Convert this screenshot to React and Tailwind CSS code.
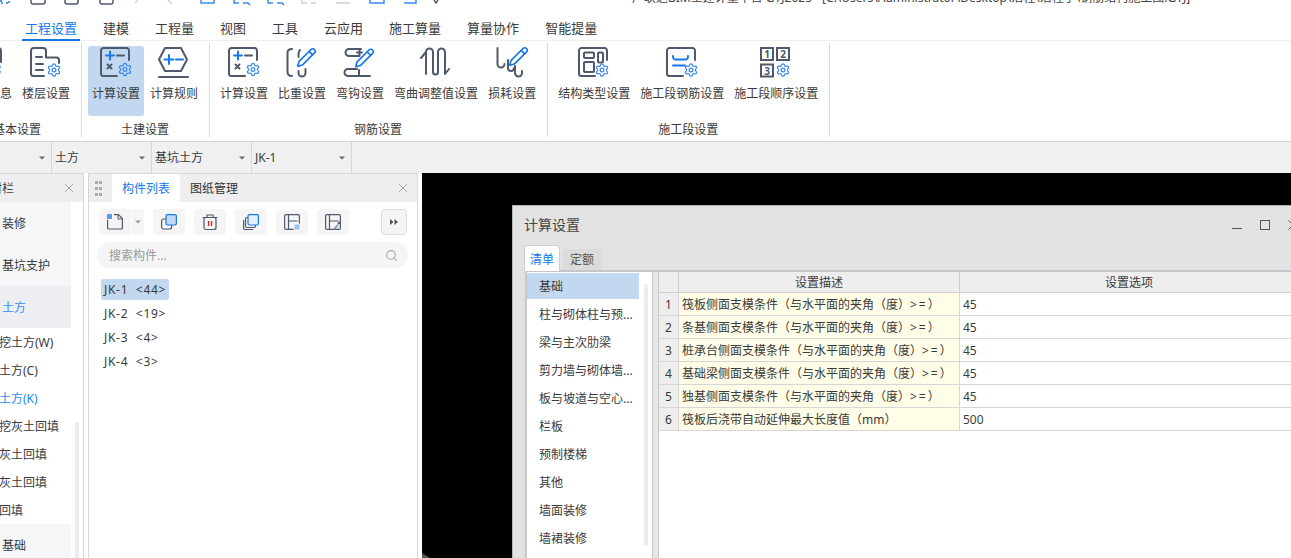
import { Settings, Pencil, X, Search } from 'lucide-react';

const INK = '#50586b';
const BLUE = '#1677e8';
const GEAR = '#3d8bef';

const Gear = ({ x = 17.5, y = 15 }) => <Settings x={x} y={y} size={15} color={GEAR} strokeWidth={2} />;
const Pen = ({ x = 10, y = 0 }) => <Pencil x={x} y={y} size={21} color={BLUE} strokeWidth={1.9} />;

const Ico = ({ children }) => (
  <svg width="30" height="30" viewBox="0 0 30 30" fill="none" stroke={INK} strokeWidth="2" strokeLinecap="round" strokeLinejoin="round" className="overflow-visible mr-[2px] shrink-0">
    {children}
  </svg>
);

const Frame = () => <path d="M17 29H3.5A2.5 2.5 0 0 1 1 26.500V3.500A2.500 2.500 0 0 1 3.500 1h23A2.500 2.500 0 0 1 29 3.500V13" />;

const CalcIcon = () => (
  <Ico>
    <Frame />
    <path d="M6 8.500h8M10 4.500v8" stroke={BLUE} />
    <path d="M17 8.500h7" />
    <path d="M7.500 17.500l4 4M11.500 17.500l-4 4" />
    <Gear />
  </Ico>
);

const icons = {
  info: () => (
    <Ico>
      <path d="M22 1h4a3 3 0 0 1 3 3v11" />
      <Gear x={15} y={15} />
    </Ico>
  ),
  floor: () => (
    <Ico>
      <path d="M14 29H3.500A2.500 2.500 0 0 1 1 26.500V3.500A2.500 2.500 0 0 1 3.500 1H13a3 3 0 0 1 3 3v6.500h10.500a2.500 2.500 0 0 1 2.500 2.500v3" />
      <path d="M6 10h6M6 17h7M6 23h7" />
      <Gear x={16.500} y={15.500} />
    </Ico>
  ),
  calc: CalcIcon,
  rule: () => (
    <Ico>
      <path d="M7 1h16l6 11.500-6 11.500H7L1 12.500z" />
      <path d="M6.500 12.500h9M11 8v9M18 12.500h7" stroke={BLUE} />
      <path d="M1 30h29" />
    </Ico>
  ),
  weight: () => (
    <Ico>
      <path d="M6 2C3 2 1.500 3.500 1.500 6v19c0 2.500 1.500 4 4.500 4" />
      <path d="M14 3c-1 1-1.500 2-1.500 4v3" />
      <path d="M12.500 24v2a3.500 3.500 0 0 0 7 0v-4" />
      <Pen />
    </Ico>
  ),
  hook: () => (
    <Ico>
      <path d="M17 2H5a3.500 3.500 0 0 0 0 7h10" />
      <path d="M13 5.500h5M15.500 2v7" />
      <path d="M13 22H4a3.500 3.500 0 0 0 0 7h22M15 23v6" />
      <Pen x={10} y={0.500} />
    </Ico>
  ),
  bend: () => (
    <Ico>
      <path d="M1 11l5-6v22M6 5a3.500 3.500 0 0 1 7 0v20a2.500 2.500 0 0 0 5 0V5a3.500 3.500 0 0 1 7 0v22l4-5" />
    </Ico>
  ),
  loss: () => (
    <Ico>
      <path d="M1.500 1v16a3.500 3.500 0 0 0 7 0" />
      <path d="M12 13v8a3 3 0 0 0 6 0" />
      <path d="M19 19v7a3 3 0 0 0 7 0v-2" />
      <Pen x={12} y={-1} />
    </Ico>
  ),
  struct: () => (
    <Ico>
      <Frame />
      <rect x="6" y="5.500" width="10" height="5.500" rx="1" />
      <rect x="20" y="5.500" width="5" height="10" rx="1" />
      <rect x="6" y="15" width="10" height="10" rx="1" />
      <Gear x={16.500} y={15.500} />
    </Ico>
  ),
  rebar: () => (
    <Ico>
      <Frame />
      <path d="M7 9c0 3 1 3.500 3 3.500h9c2 0 3-.5 3-3.500M7 18.500h12" stroke={BLUE} />
      <Gear x={17.500} y={15.500} />
    </Ico>
  ),
  order: () => (
    <Ico>
      <rect x="1" y="1" width="12" height="12" strokeLinejoin="miter" />
      <rect x="17" y="1" width="12" height="12" strokeLinejoin="miter" />
      <rect x="1" y="17.500" width="12" height="12" strokeLinejoin="miter" />
      <text x="7" y="11" textAnchor="middle" fontSize="10" fontWeight="700" fill={INK} stroke="none">1</text>
      <text x="23" y="11" textAnchor="middle" fontSize="10" fontWeight="700" fill={INK} stroke="none">2</text>
      <text x="7" y="27.500" textAnchor="middle" fontSize="10" fontWeight="700" fill={INK} stroke="none">3</text>
      <Gear x={15.500} y={15.500} />
    </Ico>
  ),
};

const groups = [
  { label: '基本设置', items: [['基本信息', 'info'], ['楼层设置', 'floor']] },
  { label: '土建设置', items: [['计算设置', 'calc', true], ['计算规则', 'rule']] },
  { label: '钢筋设置', items: [['计算设置', 'calc'], ['比重设置', 'weight'], ['弯钩设置', 'hook'], ['弯曲调整值设置', 'bend'], ['损耗设置', 'loss']] },
  { label: '施工段设置', items: [['结构类型设置', 'struct'], ['施工段钢筋设置', 'rebar'], ['施工段顺序设置', 'order']] },
];

const tabs = ['工程设置', '建模', '工程量', '视图', '工具', '云应用', '施工算量', '算量协作', '智能提量'];

const Caret = ({ color = '#666' }) => (
  <svg width="6" height="4" viewBox="0 0 6 4"><path d="M0 .5h6L3 3.500z" fill={color} /></svg>
);

const ToolSvg = ({ children }) => (
  <svg width="16" height="16" viewBox="0 0 16 16" fill="none" stroke={INK} strokeWidth="1.200" strokeLinejoin="round" className="overflow-visible">
    {children}
  </svg>
);

const tools = [
  <ToolSvg>
    <path d="M7 .6h4.500L15.400 4.500v9.500a1 1 0 0 1-1 1H1.600a1 1 0 0 1-1-1V6" />
    <path d="M11 .6v4.400h4.400" strokeWidth="1" />
    <rect x="0" y="0" width="5" height="5" fill="#5b9bef" stroke="none" />
  </ToolSvg>,
  <ToolSvg>
    <rect x=".6" y="5" width="10" height="10" rx="2" />
    <rect x="5" y=".6" width="10.400" height="10.400" rx="1.500" fill="#c1d8f0" stroke={BLUE} />
  </ToolSvg>,
  <ToolSvg>
    <path d="M.6 3.500h14.800M5 3.500V1h6v2.500" />
    <rect x="2" y="3.500" width="12" height="12" rx="2" />
    <path d="M6.500 7v5M9.500 7v5" stroke="#e01818" strokeWidth="1.300" />
  </ToolSvg>,
  <ToolSvg>
    <path d="M.6 6v8a1.500 1.500 0 0 0 1.500 1.500h8" />
    <rect x="2.500" y="3.500" width="10" height="10" rx="1.500" />
    <rect x="5" y=".6" width="10.400" height="10.400" rx="1.500" fill="#e6f0fd" stroke={BLUE} />
  </ToolSvg>,
  <ToolSvg>
    <rect x=".6" y=".6" width="14.800" height="14.800" rx="1.500" />
    <path d="M4.500 .6v14.800M4.500 7h9" />
    <rect x="10" y="10" width="6" height="6" fill="#9cc3f2" stroke="#fff" strokeWidth=".8" />
  </ToolSvg>,
  <ToolSvg>
    <rect x=".6" y=".6" width="14.800" height="14.800" rx="1.500" />
    <path d="M4.500 .6v14.800M4.500 7h9" />
    <path d="M9 15l4-4" stroke="#8a9bb5" strokeWidth="1.800" />
    <path d="M13 10l2-2" stroke="#50586b" strokeWidth="1.800" />
  </ToolSvg>,
];

const sideRows = [
  ['装修', 'head'], ['基坑支护', 'head'], ['土方', 'sel'],
  ['挖土方(W)'], ['土方(C)'], ['土方(K)', 'blue'], ['挖灰土回填'], ['灰土回填'], ['灰土回填'], ['回填'],
  ['基础', 'head'],
];

const calcCats = ['基础', '柱与砌体柱与预...', '梁与主次肋梁', '剪力墙与砌体墙...', '板与坡道与空心...', '栏板', '预制楼梯', '其他', '墙面装修', '墙裙装修'];

const calcRows = [
  ['筏板侧面支模条件（与水平面的夹角（度）>\u2009=\u2009）', '45'],
  ['条基侧面支模条件（与水平面的夹角（度）>\u2009=\u2009）', '45'],
  ['桩承台侧面支模条件（与水平面的夹角（度）>\u2009=\u2009）', '45'],
  ['基础梁侧面支模条件（与水平面的夹角（度）>\u2009=\u2009）', '45'],
  ['独基侧面支模条件（与水平面的夹角（度）>\u2009=\u2009）', '45'],
  ['筏板后浇带自动延伸最大长度值（mm）', '500'],
];

export default function App() {
  return (
    <div className="w-[1291px] h-[558px] overflow-hidden flex flex-col bg-white text-[12px] text-[#3a3a3a] font-['Noto_Sans','Noto_Sans_CJK_SC',sans-serif]">
      {/* title strip, cut by the top of the shot */}
      <div className="h-[14px] shrink-0 flex overflow-hidden">
        <svg width="632" height="14" viewBox="0 0 632 14" fill="none" strokeWidth="1.500" className="shrink-0">
          <path d="M1 0v3h2M6 3h2M9 3V0" stroke={BLUE} strokeDasharray="2 1" />
          <path d="M31 0v2a2 2 0 0 0 2 2h10a2 2 0 0 0 2-2V0M65 0v2a2 2 0 0 0 2 2h9a2 2 0 0 0 2-2V0M100 0v2a2 2 0 0 0 2 2h9a2 2 0 0 0 2-2V0" stroke={INK} />
          <path d="M135 3l3-3M172 4l-4-4" stroke="#d4d4d4" />
          <path d="M201 0v3h13V0M234 0v3h5M243 3h5l2 2M268 0v3h5M277 3h5l2 2M370 0v3h14V0M404 3h12V0" stroke="#3d8bef" />
          <path d="M302 0v3h5M311 3h5M336 3h14" stroke="#cfcfcf" />
          <path d="M434 0l2 3 2-3" stroke={INK} />
        </svg>
        <div className="-mt-[9px] leading-[14px] whitespace-nowrap text-[#444]">
          广联达BIM土建计量平台 GTJ2025 - [C:\Users\Administrator\Desktop\活柱\活柱子\钢筋结构施工图.GTJ]
        </div>
      </div>

      {/* ribbon tabs */}
      <div className="h-[27px] shrink-0 flex gap-5 pl-[22px] border-b border-[#f0f0f0] text-[13px]">
        {tabs.map((t, i) => (
          <div key={t} className={`h-[27px] px-[3px] pt-[4px] flex items-center border-b-2 ${i === 0 ? 'border-[#1677e8] text-[#1677e8]' : 'border-transparent'}`}>
            {t}
          </div>
        ))}
      </div>

      {/* ribbon */}
      <div className="h-[100px] shrink-0 flex pt-[2px] -ml-[46px]">
        {groups.map((g) => (
          <div key={g.label} className="h-[94px] pl-[6px] pr-[7px] pt-[3px] border-r border-[#dcdcdc] flex flex-col items-stretch">
            <div className="flex gap-[2px] h-[70px]">
              {g.items.map(([label, icon, active]) => {
                const Icon = icons[icon];
                return (
                  <div key={label + g.label} className={`px-1 pt-px flex flex-col items-center rounded-[3px] ${active ? 'bg-[#c1d8f0]' : ''}`}>
                    <Icon />
                    <div className="mt-[10px] leading-[14px] whitespace-nowrap">{label}</div>
                  </div>
                );
              })}
            </div>
            <div className="mt-[7px] leading-[14px] text-center">{g.label}</div>
          </div>
        ))}
      </div>

      {/* selector row */}
      <div className="h-[32px] shrink-0 flex bg-[#f0f0f0] border-t border-[#d8d8d8]">
        {[['', 'w-[52px]'], ['土方', 'w-[100px]'], ['基坑土方', 'w-[100px]'], ['JK-1', 'w-[100px]']].map(([t, w], i) => (
          <div key={i} className={`${w} pl-[3px] pr-[6px] flex items-center justify-between border-r border-[#d8d8d8]`}>
            <span>{t}</span>
            <Caret />
          </div>
        ))}
      </div>

      {/* work area */}
      <div className="flex-1 min-h-0 flex">
        {/* left nav panel */}
        <div className="w-[84px] shrink-0 flex flex-col border-r border-t border-[#d8d8d8]">
          <div className="h-[28px] shrink-0 bg-[#eeeef0] flex items-center justify-between pr-[6px] text-[#444]">
            <span className="pl-[2px] pt-px -ml-[12px] whitespace-nowrap">材栏</span>
            <X size={16} strokeWidth={1.500} color="#a8a8a8" />
          </div>
          <div className="flex-1 min-h-0 flex overflow-hidden">
            <div className="w-[71px] shrink-0">
              {sideRows.map(([t, kind], i) => (
                <div
                  key={i}
                  className={`flex items-center pl-[2px] pt-[2px] ${kind === 'head' ? 'h-[42px] bg-[#f5f6f8]' : kind === 'sel' ? 'h-[42px] bg-[#eeeff3] text-[#3d8bef]' : 'h-[28px]'} ${kind === 'blue' ? 'text-[#1c8af0]' : ''}`}
                >
                  <span className={`whitespace-nowrap ${!kind || kind === 'blue' ? '-ml-[3px]' : ''}`}>{t}</span>
                </div>
              ))}
            </div>
            <div className="ml-[4px] pt-[220px]">
              <div className="w-[4px] h-[200px] bg-[#ececec] rounded-t-[2px]" />
            </div>
          </div>
        </div>

        <div className="w-[4px] shrink-0 bg-white" />

        {/* component list panel */}
        <div className="w-[330px] shrink-0 flex flex-col border-x border-t border-[#d8d8d8]">
          <div className="h-[28px] shrink-0 bg-[#eeeef0] flex items-center pr-[6px]">
            <div className="w-[23px] pl-[6px] shrink-0">
              <div className="grid grid-cols-[3px_3px] gap-x-px gap-y-[3px]">
                {[0, 1, 2, 3, 4, 5].map((d) => (
                  <span key={d} className="w-[3px] h-[3px] bg-[#aaa]" />
                ))}
              </div>
            </div>
            <div className="w-[68px] h-full pt-px bg-white text-[#1677e8] flex items-center justify-center">构件列表</div>
            <div className="ml-[10px] pt-px text-[#333]">图纸管理</div>
            <div className="ml-auto">
              <X size={16} strokeWidth={1.500} color="#a8a8a8" />
            </div>
          </div>

          <div className="flex pl-[10px] pr-[10px] pt-[7px] h-[33px] shrink-0">
            <div className="w-[32px] h-[26px] bg-[#f5f5f5] rounded-l-[4px] flex items-center justify-center">{tools[0]}</div>
            <div className="ml-px w-[12px] h-[26px] bg-[#f5f5f5] rounded-r-[3px] flex items-center justify-center">
              <Caret color="#999" />
            </div>
            <div className="ml-[9px] flex gap-[9px]">
              {tools.slice(1).map((t, i) => (
                <div key={i} className="w-[32px] h-[26px] bg-[#f5f5f5] rounded-[4px] flex items-center justify-center">{t}</div>
              ))}
            </div>
            <div className="ml-auto w-[26px] h-[26px] bg-[#f5f5f5] border border-[#dedede] rounded-[4px] flex items-center justify-center">
              <svg width="8" height="6" viewBox="0 0 8 6"><path d="M0 0l3.500 3L0 6zM4.500 0L8 3 4.500 6z" fill="#555" /></svg>
            </div>
          </div>

          <div className="ml-[8px] mr-[9px] mt-[7px] h-[26px] shrink-0 rounded-full bg-[#f5f5f5] flex items-center justify-between pl-[12px] pr-[10px] text-[#999]">
            <span className="pt-px">搜索构件...</span>
            <Search size={13} color="#aaa" />
          </div>

          <div className="mt-[11px] ml-[12px] flex flex-col items-start gap-[3px] tracking-[0.7px]">
            {['JK-1  <44>', 'JK-2  <19>', 'JK-3  <4>', 'JK-4  <3>'].map((t, i) => (
              <div key={t} className={`h-[21px] px-[3px] flex items-center rounded-[3px] whitespace-pre ${i === 0 ? 'bg-[#c1d8f0]' : ''}`}>{t}</div>
            ))}
          </div>
        </div>

        <div className="w-[4px] shrink-0 bg-white" />

        {/* black canvas with dialog */}
        <div className="relative flex-1 min-w-0 bg-black pl-[90px] pt-[32px] overflow-hidden">
          <svg width="8" height="5" viewBox="0 0 8 5" className="absolute left-0 bottom-0"><path d="M0 0l8 5H0z" fill="#555" /></svg>

          <div className="w-[800px] h-[400px] bg-[#e2e2e2] border border-[#b4b4b4]">
            <div className="h-[39px] pb-[2px] pl-[11px] pr-[13px] flex items-center justify-between">
              <span className="text-[14px] text-[#444]">计算设置</span>
              <div className="flex gap-[18px] items-center">
                <svg width="10" height="10" viewBox="0 0 10 10" stroke="#555" fill="none"><path d="M0 8.500h10" /></svg>
                <svg width="10" height="10" viewBox="0 0 10 10" stroke="#555" fill="none"><rect x=".5" y=".5" width="9" height="9" /></svg>
                <svg width="10" height="10" viewBox="0 0 10 10" stroke="#555" fill="none"><path d="M.5 .5l9 9M9.500 .5l-9 9" /></svg>
              </div>
            </div>

            <div className="h-[25px] pl-[11px] flex items-start">
              <div className="relative w-[36px] h-[26px] pt-[2px] bg-white border border-b-0 border-[#cfcfcf] rounded-t-[4px] text-[#1677e8] flex items-center justify-center">清单</div>
              <div className="ml-[3px] mt-[4px] w-[38px] h-[21px] pt-px bg-[#dbdbdb] rounded-t-[3px] text-[#555] flex items-center justify-center">定额</div>
            </div>

            <div className="ml-[12px] flex h-[320px] border-t-2 border-[#c6c6ca]">
              <div className="w-[128px] shrink-0 h-full bg-white border-l-2 border-r border-[#c8c8c8] flex">
                <div className="w-[112px] shrink-0 pt-px">
                  {calcCats.map((c, i) => (
                    <div key={c} className={`h-[26px] mb-[2px] pl-[12px] pt-[2px] flex items-center whitespace-nowrap ${i === 0 ? 'w-[112px] bg-[#c1d8f0]' : ''}`}>{c}</div>
                  ))}
                </div>
                <div className="ml-[5px] mt-[12px] w-[4px] h-[262px] rounded-[2px] bg-[#ececec]" />
              </div>
              <div className="w-[5px] shrink-0 bg-[#e8e8e8]" />
              <div className="flex-1 bg-white border-l border-[#c8c8c8]">
                <div className="grid grid-cols-[20px_281px_339px] h-[21px]">
                  <div className="bg-[#eeeeee] border-r border-b border-[#cfcfd3]" />
                  <div className="bg-[#eeeeee] border-r border-b border-[#cfcfd3] pt-[2px] flex items-center justify-center">设置描述</div>
                  <div className="bg-[#eeeeee] border-r border-b border-[#cfcfd3] pt-[2px] flex items-center justify-center">设置选项</div>
                </div>
                <div className="grid grid-cols-[20px_281px_339px] auto-rows-[23px]">
                  {calcRows.map(([desc, val], i) => [
                    <div key={`n${i}`} className="bg-[#eeeeee] border-r border-b border-[#d6d6d6] pt-[2px] flex items-center justify-center">{i + 1}</div>,
                    <div key={`d${i}`} className="bg-[#fffde8] border-r border-b border-[#d6d6d6] pl-[3px] pt-[2px] flex items-center whitespace-nowrap">{desc}</div>,
                    <div key={`v${i}`} className="bg-white border-b border-[#d6d6d6] pl-[3px] pt-[2px] flex items-center">{val}</div>,
                  ])}
                </div>
              </div>
            </div>
          </div>
        </div>
      </div>
    </div>
  );
}
